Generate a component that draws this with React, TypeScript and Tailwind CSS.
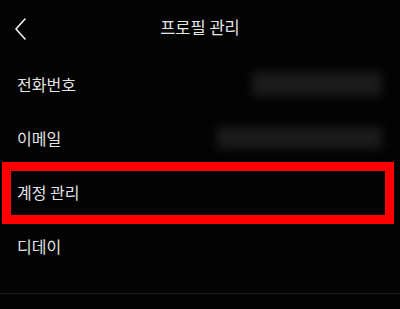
import React from 'react';

const rows = [
  { label: '전화번호', blur: 'w-[130px] h-[24px]' },
  { label: '이메일', blur: 'w-[165px] h-[22px]' },
  { label: '계정 관리', highlight: true },
  { label: '디데이' },
];

export default function App() {
  return (
    <div
      className="w-[400px] h-[309px] bg-[#030303] text-[#e4e4e4] overflow-hidden"
      style={{ fontFamily: '"Noto Sans CJK KR", "Noto Sans", sans-serif' }}
    >
      <header className="relative h-[57px] flex items-center justify-center">
        <button className="absolute left-[12px] top-[15px] p-[2px]">
          <svg width="14" height="24" viewBox="0 0 14 24" fill="none">
            <path d="M11 2 L2 12 L11 22" stroke="#f2f2f2" strokeWidth="1.6" strokeLinecap="round" strokeLinejoin="round" />
          </svg>
        </button>
        <h1 className="text-[16.5px] leading-none -mt-[3px]">프로필 관리</h1>
      </header>

      <ul>
        {rows.map((row) => (
          <li key={row.label} className="relative h-[54px] flex items-center justify-between pl-[17px] pr-[18px]">
            <span className="text-[16px] leading-none">{row.label}</span>
            {row.blur && <div className={`${row.blur} bg-[#1b1b1b] blur-[5px]`} />}
            {row.highlight && (
              <div className="absolute left-[2px] right-[6px] -top-[3px] -bottom-[5px] border-[9px] border-[#ff0000]" />
            )}
          </li>
        ))}
      </ul>

      <div className="mt-[20px] border-t border-[#1a1a1a]" />
    </div>
  );
}
